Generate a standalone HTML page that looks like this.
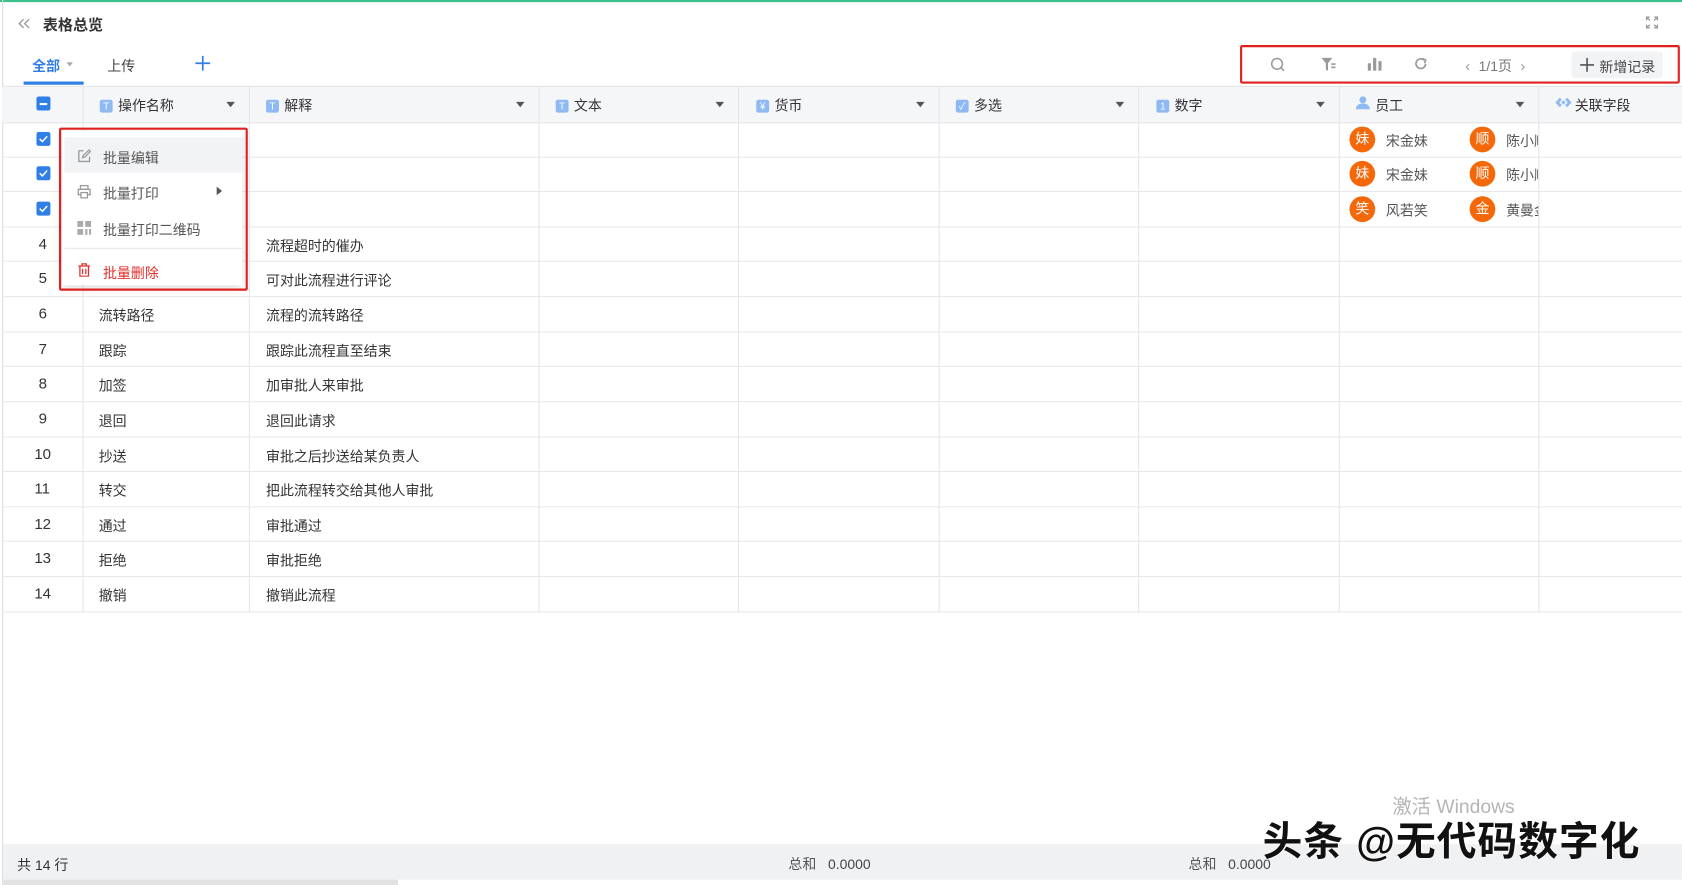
<!DOCTYPE html>
<html><head><meta charset="utf-8"><style>
html,body{margin:0;padding:0;width:1682px;height:885px;overflow:hidden;background:#fff}
#w{position:absolute;left:0;top:0;width:1568px;height:825px;transform:scale(1.07270);transform-origin:0 0;font-family:"Liberation Sans","Noto Sans CJK SC",sans-serif;font-size:13px;color:#333}
.a{position:absolute}
.hd{position:absolute;top:80px;height:33px;background:#f5f6f8;border-bottom:1px solid #e3e5e8;border-top:1px solid #e3e5e8;left:2px;right:0}
.vl{position:absolute;top:80px;height:490px;width:1px;background:#e3e5e8}
.hl{position:absolute;left:2px;right:0;height:1px;background:#e6e8eb}
.ic{display:inline-block;width:12px;height:12px;background:#8fb9f2;border-radius:2px;color:#fff;font-size:9px;line-height:12px;text-align:center;vertical-align:1px;margin-right:5px}
.car{position:absolute;width:0;height:0;border-left:4px solid transparent;border-right:4px solid transparent;border-top:5px solid #555}
.cb{position:absolute;width:13px;height:13px;background:#2f7fe6;border-radius:2px}
.av{position:absolute;width:24px;height:24px;border-radius:12px;background:#f5680a;color:#fff;font-size:13px;line-height:24px;text-align:center}
.mi{position:absolute;left:96px;font-size:13px;color:#555}
</style></head><body><div id="w">
<div class="a" style="left:0;top:0;width:1568px;height:2px;background:#3cc08f"></div>
<div class="a" style="left:2px;top:0;width:1px;height:825px;background:#dcdcdc"></div>
<svg class="a" style="left:16px;top:17px" width="13" height="10" viewBox="0 0 13 10" fill="none" stroke="#999" stroke-width="1.3"><path d="M6 1L2 5l4 4M11 1L7 5l4 4"/></svg>
<div class="a" style="left:40px;top:13px;font-size:14px;font-weight:bold;color:#333">表格总览</div>
<svg class="a" style="left:1534px;top:15px" width="12" height="12" viewBox="0 0 12 12" fill="none" stroke="#999" stroke-width="1.2"><path d="M1 4V1h3M8 1h3v3M11 8v3H8M4 11H1V8M1 1l3 3M11 1L8 4M11 11L8 8M1 11l3-3"/></svg>
<div class="a" style="left:30px;top:51px;color:#2f7fe6;font-weight:bold">全部</div>
<div class="car" style="left:62px;top:58px;border-top-color:#aaa;border-width:4px 3px 0 3px"></div>
<div class="a" style="left:100px;top:51px;color:#444">上传</div>
<svg class="a" style="left:182px;top:52px" width="14" height="14" viewBox="0 0 14 14" stroke="#2f7fe6" stroke-width="1.6"><path d="M7 0v14M0 7h14"/></svg>
<div class="a" style="left:22px;top:76px;width:56px;height:3px;background:#2f7fe6"></div>
<div class="a" style="left:1156px;top:42px;width:406px;height:32px;border:2px solid #e0201e;border-radius:2px"></div>
<svg class="a" style="left:1184px;top:53px" width="14" height="14" viewBox="0 0 14 14" fill="none" stroke="#999" stroke-width="1.4"><circle cx="6.5" cy="6.5" r="5"/><path d="M10 10l3 3"/></svg>
<svg class="a" style="left:1232px;top:53px" width="14" height="14" viewBox="0 0 14 14" fill="#999"><path d="M0 1h10L6 6v7L4 12V6z"/><rect x="9" y="6" width="4" height="1.5"/><rect x="9" y="9" width="4" height="1.5"/></svg>
<svg class="a" style="left:1275px;top:53px" width="13" height="13" viewBox="0 0 13 13" fill="#999"><rect x="0" y="6" width="3" height="7"/><rect x="5" y="1" width="3" height="12"/><rect x="10" y="4" width="3" height="9"/></svg>
<svg class="a" style="left:1318px;top:53px" width="13" height="13" viewBox="0 0 13 13" fill="none" stroke="#999" stroke-width="1.6"><path d="M11 6.5A4.5 4.5 0 1 1 9.5 3"/><path d="M8 1.5l3 1.5-1 3" /></svg>
<div class="a" style="left:1366px;top:51px;color:#999;font-size:14px">‹&nbsp; <span style="color:#777;font-size:13px">1/1页</span> &nbsp;›</div>
<div class="a" style="left:1465px;top:48px;width:85px;height:25px;background:#f2f3f5;border-radius:3px"></div>
<svg class="a" style="left:1473px;top:54px" width="13" height="13" viewBox="0 0 13 13" stroke="#555" stroke-width="1.5"><path d="M6.5 0v13M0 6.5h13"/></svg>
<div class="a" style="left:1491px;top:52px;color:#444">新增记录</div>
<div class="hd"></div>
<div class="vl" style="left:77px"></div><div class="vl" style="left:232px"></div><div class="vl" style="left:502px"></div><div class="vl" style="left:688px"></div><div class="vl" style="left:875px"></div><div class="vl" style="left:1061px"></div><div class="vl" style="left:1248px"></div><div class="vl" style="left:1434px"></div>
<div class="cb" style="left:34px;top:90px"><div style="position:absolute;left:3px;top:6px;width:7px;height:1.5px;background:#fff"></div></div>
<div class="a" style="left:93px;top:88px"><span class="ic">T</span>操作名称</div><div class="car" style="left:211px;top:95px"></div>
<div class="a" style="left:248px;top:88px"><span class="ic">T</span>解释</div><div class="car" style="left:481px;top:95px"></div>
<div class="a" style="left:518px;top:88px"><span class="ic">T</span>文本</div><div class="car" style="left:667px;top:95px"></div>
<div class="a" style="left:705px;top:88px"><span class="ic">¥</span>货币</div><div class="car" style="left:854px;top:95px"></div>
<div class="a" style="left:891px;top:88px"><span class="ic">✓</span>多选</div><div class="car" style="left:1040px;top:95px"></div>
<div class="a" style="left:1078px;top:88px"><span class="ic">1</span>数字</div><div class="car" style="left:1227px;top:95px"></div>
<svg class="a" style="left:1264px;top:89px" width="13" height="13" viewBox="0 0 13 13" fill="#8fb9f2"><circle cx="6.5" cy="4" r="3.2"/><path d="M0 13c0-4 3-5.5 6.5-5.5S13 9 13 13z"/></svg>
<div class="a" style="left:1282px;top:88px">员工</div><div class="car" style="left:1413px;top:95px"></div>
<svg class="a" style="left:1450px;top:91px" width="15" height="9" viewBox="0 0 15 9" fill="#8fb9f2"><path d="M0 4.5L4 0l2 2-2.5 2.5L6 7 4 9zM15 4.5L11 0 9 2l2.5 2.5L9 7l2 2zM5.5 4.5l2-2 2 2-2 2z"/></svg>
<div class="a" style="left:1468px;top:88px">关联字段</div>
<div class="hl" style="top:146px"></div><div class="hl" style="top:178px"></div><div class="hl" style="top:211px"></div><div class="hl" style="top:243px"></div><div class="hl" style="top:276px"></div><div class="hl" style="top:309px"></div><div class="hl" style="top:341px"></div><div class="hl" style="top:374px"></div><div class="hl" style="top:407px"></div><div class="hl" style="top:439px"></div><div class="hl" style="top:472px"></div><div class="hl" style="top:504px"></div><div class="hl" style="top:537px"></div><div class="hl" style="top:570px"></div>
<svg class="cb" style="left:34px;top:123px" viewBox="0 0 13 13" fill="none" stroke="#fff" stroke-width="1.4"><path d="M3 6.5l2.5 2.5L10 4"/></svg>
<svg class="cb" style="left:34px;top:155px" viewBox="0 0 13 13" fill="none" stroke="#fff" stroke-width="1.4"><path d="M3 6.5l2.5 2.5L10 4"/></svg>
<svg class="cb" style="left:34px;top:188px" viewBox="0 0 13 13" fill="none" stroke="#fff" stroke-width="1.4"><path d="M3 6.5l2.5 2.5L10 4"/></svg>
<div class="a" style="left:36px;top:219px;font-size:14px">4</div><div class="a" style="left:248px;top:219px">流程超时的催办</div>
<div class="a" style="left:36px;top:251px;font-size:14px">5</div><div class="a" style="left:248px;top:251px">可对此流程进行评论</div>
<div class="a" style="left:36px;top:284px;font-size:14px">6</div><div class="a" style="left:92px;top:284px">流转路径</div><div class="a" style="left:248px;top:284px">流程的流转路径</div>
<div class="a" style="left:36px;top:317px;font-size:14px">7</div><div class="a" style="left:92px;top:317px">跟踪</div><div class="a" style="left:248px;top:317px">跟踪此流程直至结束</div>
<div class="a" style="left:36px;top:349px;font-size:14px">8</div><div class="a" style="left:92px;top:349px">加签</div><div class="a" style="left:248px;top:349px">加审批人来审批</div>
<div class="a" style="left:36px;top:382px;font-size:14px">9</div><div class="a" style="left:92px;top:382px">退回</div><div class="a" style="left:248px;top:382px">退回此请求</div>
<div class="a" style="left:32px;top:415px;font-size:14px">10</div><div class="a" style="left:92px;top:415px">抄送</div><div class="a" style="left:248px;top:415px">审批之后抄送给某负责人</div>
<div class="a" style="left:32px;top:447px;font-size:14px">11</div><div class="a" style="left:92px;top:447px">转交</div><div class="a" style="left:248px;top:447px">把此流程转交给其他人审批</div>
<div class="a" style="left:32px;top:480px;font-size:14px">12</div><div class="a" style="left:92px;top:480px">通过</div><div class="a" style="left:248px;top:480px">审批通过</div>
<div class="a" style="left:32px;top:512px;font-size:14px">13</div><div class="a" style="left:92px;top:512px">拒绝</div><div class="a" style="left:248px;top:512px">审批拒绝</div>
<div class="a" style="left:32px;top:545px;font-size:14px">14</div><div class="a" style="left:92px;top:545px">撤销</div><div class="a" style="left:248px;top:545px">撤销此流程</div>
<div class="av" style="left:1258px;top:118px">妹</div><div class="a" style="left:1292px;top:121px;color:#555">宋金妹</div><div class="av" style="left:1370px;top:118px">顺</div><div class="a" style="left:1404px;top:121px;color:#555;width:30px;overflow:hidden;white-space:nowrap">陈小顺</div>
<div class="av" style="left:1258px;top:150px">妹</div><div class="a" style="left:1292px;top:153px;color:#555">宋金妹</div><div class="av" style="left:1370px;top:150px">顺</div><div class="a" style="left:1404px;top:153px;color:#555;width:30px;overflow:hidden;white-space:nowrap">陈小顺</div>
<div class="av" style="left:1258px;top:183px">笑</div><div class="a" style="left:1292px;top:186px;color:#555">风若笑</div><div class="av" style="left:1370px;top:183px">金</div><div class="a" style="left:1404px;top:186px;color:#555;width:30px;overflow:hidden;white-space:nowrap">黄曼金</div>
<div class="a" style="left:58px;top:122px;width:168px;height:144px;background:#fff;box-shadow:0 2px 8px rgba(0,0,0,.15)"></div>
<div class="a" style="left:60px;top:128px;width:166px;height:33px;background:#f2f3f5"></div>
<div class="a" style="left:60px;top:231px;width:166px;height:1px;background:#e6e6e6"></div>
<svg class="a" style="left:72px;top:139px" width="13" height="13" viewBox="0 0 13 13" fill="none" stroke="#999" stroke-width="1.2"><path d="M6 1.5H1.5v10h10V7"/><path d="M5 8l.5-2L11 .8l1.3 1.3L7 7.5z"/></svg>
<div class="mi" style="top:137px">批量编辑</div>
<svg class="a" style="left:72px;top:172px" width="13" height="13" viewBox="0 0 13 13" fill="none" stroke="#999" stroke-width="1.2"><rect x="3" y="1" width="7" height="3.5"/><rect x="1" y="4.5" width="11" height="5"/><rect x="3.5" y="7.5" width="6" height="5" fill="#fff"/></svg>
<div class="mi" style="top:170px">批量打印</div>
<div class="a" style="left:202px;top:174px;width:0;height:0;border-top:4px solid transparent;border-bottom:4px solid transparent;border-left:5px solid #555"></div>
<svg class="a" style="left:72px;top:206px" width="13" height="13" viewBox="0 0 13 13" fill="#aaa"><rect x="0" y="0" width="5.5" height="5.5"/><rect x="7.5" y="0" width="5.5" height="5.5"/><rect x="0" y="7.5" width="5.5" height="5.5"/><rect x="7.5" y="7.5" width="2" height="5.5"/><rect x="11" y="7.5" width="2" height="5.5"/></svg>
<div class="mi" style="top:204px">批量打印二维码</div>
<svg class="a" style="left:72px;top:245px" width="13" height="13" viewBox="0 0 13 13" fill="none" stroke="#e0302c" stroke-width="1.2"><path d="M1 3h11M4.5 3V1h4v2M2.5 3v9.5h8V3M5 5.5v5M8 5.5v5"/></svg>
<div class="mi" style="top:244px;color:#e0302c">批量删除</div>
<div class="a" style="left:55px;top:119px;width:172px;height:148px;border:2px solid #e0201e;border-radius:2px"></div>
<div class="a" style="left:3px;top:787px;width:1565px;height:33px;background:#f0f1f3"></div>
<div class="a" style="left:16px;top:796px">共 14 行</div>
<div class="a" style="left:735px;top:795px;color:#555">总和 &nbsp; <span style="color:#444">0.0000</span></div>
<div class="a" style="left:1108px;top:795px;color:#555">总和 &nbsp; <span style="color:#444">0.0000</span></div>
<div class="a" style="left:3px;top:820px;width:368px;height:5px;background:#e2e2e2"></div>
<div class="a" style="left:1298px;top:738px;color:#b5b5b5;font-size:18px">激活 Windows</div>
<div class="a" style="left:1177px;top:754px;color:#111;font-size:37px;font-weight:bold;letter-spacing:1px;text-shadow:0 0 2px #fff,0 0 2px #fff">头条 @无代码数字化</div>
</div></body></html>
